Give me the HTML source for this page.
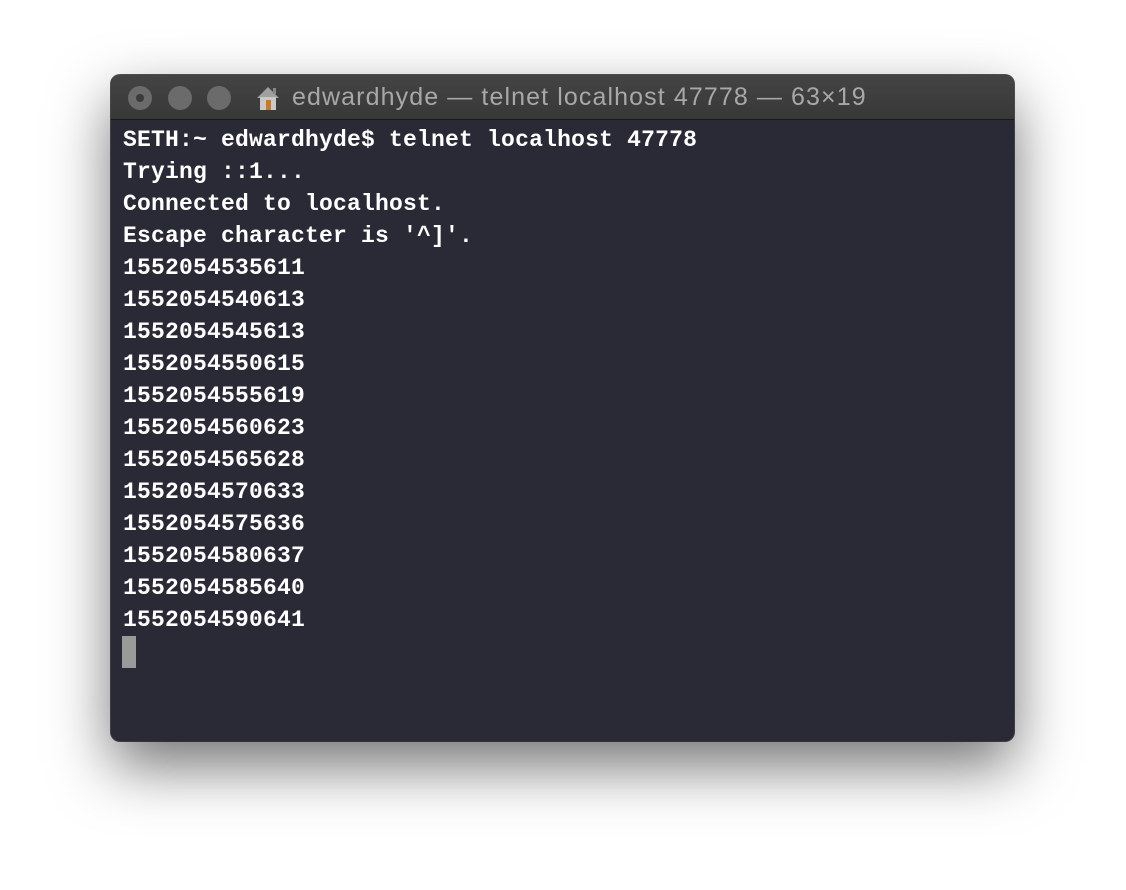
<!DOCTYPE html>
<html><head><style>
body{margin:0;width:1126px;height:890px;background:#fff;position:relative;overflow:hidden;font-family:"Liberation Sans",sans-serif}
.win{position:absolute;left:111px;top:75px;width:903px;height:666px;border-radius:9px;background:#292a36;box-shadow:0 25px 60px rgba(0,0,0,.55),0 0 0 1px #555;overflow:hidden}
.tb{height:44px;background:linear-gradient(#444,#383838);border-bottom:1px solid #1a1a1a;position:relative}
.b{position:absolute;top:11px;width:24px;height:24px;border-radius:50%;background:#6b6b6b}
.b i{position:absolute;left:8px;top:8px;width:8px;height:8px;border-radius:50%;background:#3a3a3a}
.t{position:absolute;left:181px;top:8px;font-size:25px;letter-spacing:1.1px;color:#a8a8a8;white-space:nowrap}
pre{margin:0;position:absolute;left:12px;top:49px;font-family:"Liberation Mono",monospace;font-weight:bold;font-size:23px;letter-spacing:0.2px;line-height:32px;color:#fff}
.cur{position:absolute;left:11px;top:561px;width:14px;height:32px;background:#9a9a9a}
</style></head><body>
<div class="win">
<div class="tb">
<div class="b" style="left:17px"><i></i></div>
<div class="b" style="left:57px"></div>
<div class="b" style="left:96px"></div>
<svg style="position:absolute;left:144px;top:10px" width="26" height="26" viewBox="0 0 26 26"><path d="M2 13 L13 2 L24 13 Z" fill="#a0a0a0"/><rect x="5" y="12" width="16" height="13" fill="#c9c9c9"/><rect x="11" y="15" width="5" height="10" fill="#c87a2a"/><rect x="18" y="3" width="3" height="6" fill="#888"/></svg>
<div class="t">edwardhyde — telnet localhost 47778 — 63×19</div>
</div>
<pre>SETH:~ edwardhyde$ telnet localhost 47778
Trying ::1...
Connected to localhost.
Escape character is '^]'.
1552054535611
1552054540613
1552054545613
1552054550615
1552054555619
1552054560623
1552054565628
1552054570633
1552054575636
1552054580637
1552054585640
1552054590641</pre>
<div class="cur"></div>
</div>
</body></html>
